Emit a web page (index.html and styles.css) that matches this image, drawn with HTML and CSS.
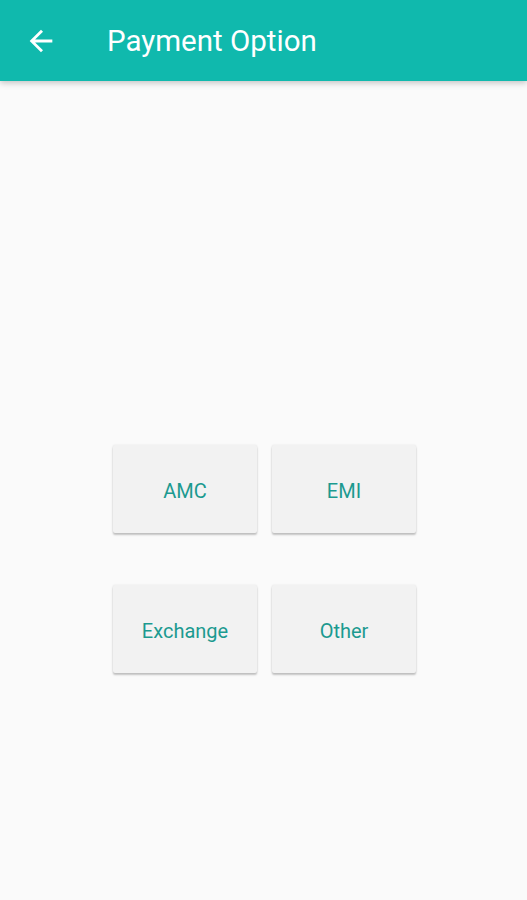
FILE: index.html
```html
<!DOCTYPE html>
<html lang="en">
<head>
    <meta charset="UTF-8">
    <meta name="viewport" content="width=device-width, initial-scale=1.0">
    <link rel="stylesheet" href="styles.css">
</head>
<body>
    <header class="toolbar">
        <button class="back-btn" aria-label="Back">
            <svg viewBox="0 0 24 24" width="34" height="34">
                <path fill="#fff" d="M20 11H7.83l5.59-5.59L12 4l-8 8 8 8 1.41-1.41L7.83 13H20v-2z"/>
            </svg>
        </button>
        <h1 class="title">Payment Option</h1>
    </header>

    <main class="content">
        <div class="options">
            <button class="option">AMC</button>
            <button class="option">EMI</button>
            <button class="option">Exchange</button>
            <button class="option">Other</button>
        </div>
    </main>
</body>
</html>
```

FILE: styles.css
```css
body {
    margin: 0;
    padding: 0;
    background: #fafafa;
    font-family: Roboto, "Noto Sans", sans-serif;
    min-height: 100vh;
}
.toolbar {
    height: 81px;
    background: #10b9ad;
    display: flex;
    align-items: center;
    box-shadow: 0 2px 6px rgba(0,0,0,0.22);
    position: relative;
}
.back-btn {
    background: none;
    border: none;
    padding: 0;
    margin-left: 24px;
    width: 34px;
    height: 34px;
    display: flex;
}
.title {
    margin: 0 0 0 49px;
    color: #fff;
    font-size: 29.5px;
    font-weight: 400;
}
.content {
    display: flex;
    justify-content: center;
    padding-top: 364px;
    padding-left: 2px;
}
.options {
    display: grid;
    grid-template-columns: 144px 144px;
    column-gap: 15px;
    row-gap: 52px;
}
.option {
    height: 88px;
    background: #f2f2f2;
    border: none;
    border-radius: 2px;
    box-shadow: 0 2px 2px rgba(0,0,0,0.22), 0 0 2px rgba(0,0,0,0.10);
    color: #1c9a90;
    font-family: Roboto, "Noto Sans", sans-serif;
    font-size: 20px;
    padding: 4px 0 0 0;
    cursor: pointer;
}
```
